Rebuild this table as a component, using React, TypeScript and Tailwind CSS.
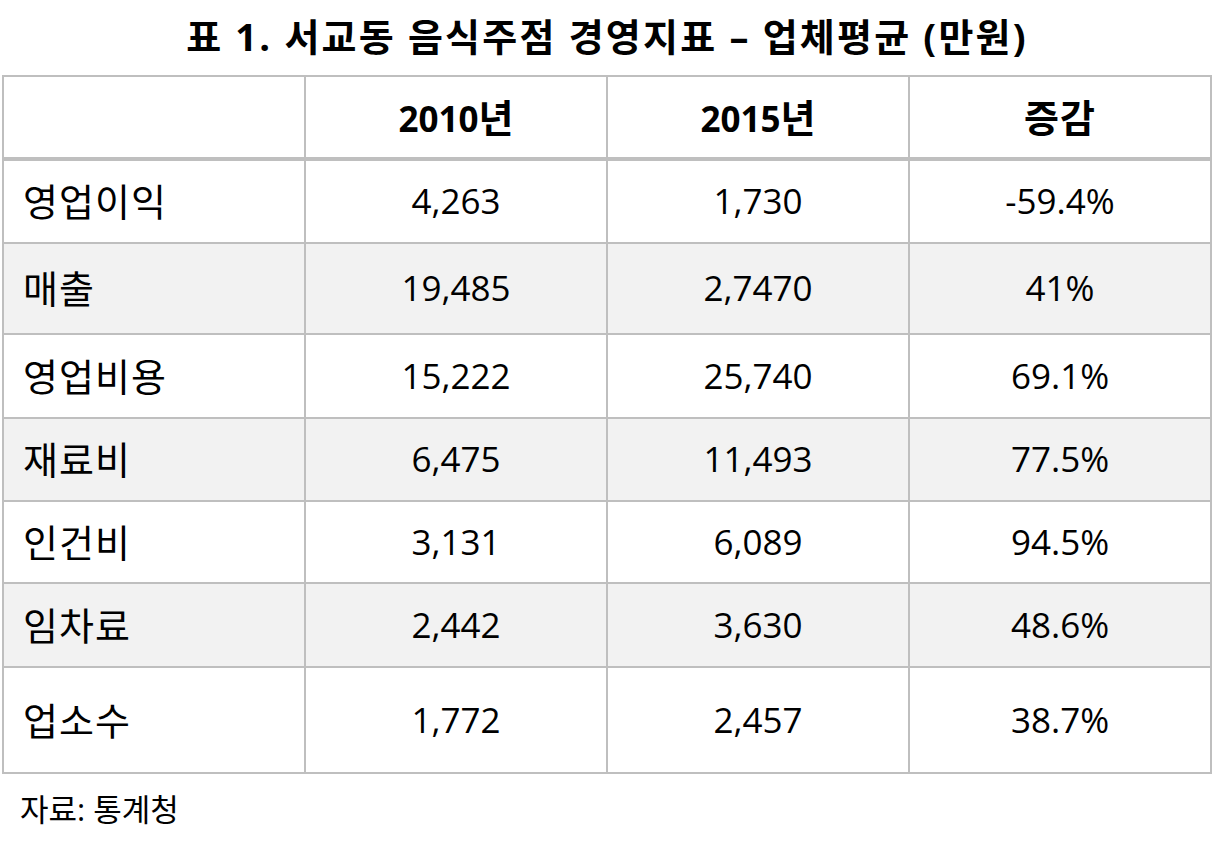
import React from 'react';

interface Row {
    label: string;
    y2010: string;
    y2015: string;
    change: string;
    height: string;
}

const rows: Row[] = [
    { label: '영업이익', y2010: '4,263', y2015: '1,730', change: '-59.4%', height: 'h-[84px]' },
    { label: '매출', y2010: '19,485', y2015: '2,7470', change: '41%', height: 'h-[91px]' },
    { label: '영업비용', y2010: '15,222', y2015: '25,740', change: '69.1%', height: 'h-[84px]' },
    { label: '재료비', y2010: '6,475', y2015: '11,493', change: '77.5%', height: 'h-[83px]' },
    { label: '인건비', y2010: '3,131', y2015: '6,089', change: '94.5%', height: 'h-[82px]' },
    { label: '임차료', y2010: '2,442', y2015: '3,630', change: '48.6%', height: 'h-[84px]' },
    { label: '업소수', y2010: '1,772', y2015: '2,457', change: '38.7%', height: 'h-[106px]' },
];

const font = "font-['Open_Sans','Noto_Sans_CJK_KR',sans-serif]";

const App: React.FC = () => {
    return (
        <div className={`w-[1214px] h-[845px] bg-white text-black ${font}`}>
            <div className="h-[75px] flex items-center justify-center pb-[4px]">
                <h1 className="text-[38px] font-bold leading-none tracking-[2.2px]">
                    표 1. 서교동 음식주점 경영지표 – 업체평균 (만원)
                </h1>
            </div>
            <div className="px-[2px]">
                <table className="w-full table-fixed border-collapse border-2 border-[#bfbfbf]">
                    <thead>
                        <tr className="h-[83px]">
                            <th className="border-2 border-b-4 border-[#bfbfbf] w-[302px]"></th>
                            <th className="border-2 border-b-4 border-[#bfbfbf] text-[35px] font-bold">
                                2010<span className="text-[38px]">년</span>
                            </th>
                            <th className="border-2 border-b-4 border-[#bfbfbf] text-[35px] font-bold">
                                2015<span className="text-[38px]">년</span>
                            </th>
                            <th className="border-2 border-b-4 border-[#bfbfbf] text-[38px] font-bold tracking-[1px]">증감</th>
                        </tr>
                    </thead>
                    <tbody>
                        {rows.map((row, i) => (
                            <tr key={row.label} className={`${row.height} ${i % 2 === 1 ? 'bg-[#f2f2f2]' : 'bg-white'}`}>
                                <td className="border-2 border-[#bfbfbf] pl-[19px] text-[38px] tracking-[1px] text-left">{row.label}</td>
                                <td className="border-2 border-[#bfbfbf] text-[35px] text-center">{row.y2010}</td>
                                <td className="border-2 border-[#bfbfbf] text-[35px] text-center">{row.y2015}</td>
                                <td className="border-2 border-[#bfbfbf] text-[35px] text-center">{row.change}</td>
                            </tr>
                        ))}
                    </tbody>
                </table>
            </div>
            <p className="mt-[20px] pl-[20px] text-[31px] leading-none">자료: 통계청</p>
        </div>
    );
};

export default App;
